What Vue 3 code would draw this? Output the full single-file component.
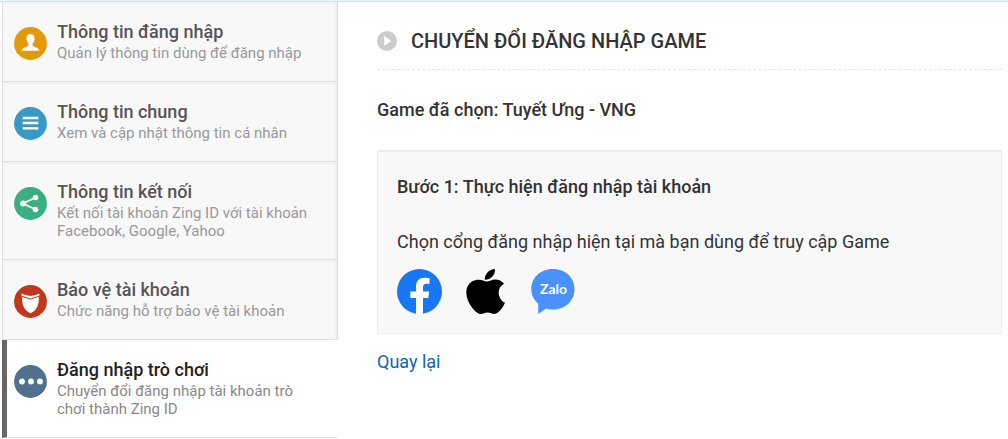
<script setup>
const items = [
  { id: 'login', title: 'Thông tin đăng nhập', text: 'Quản lý thông tin dùng để đăng nhập', color: '#e29a09' },
  { id: 'info', title: 'Thông tin chung', text: 'Xem và cập nhật thông tin cá nhân', color: '#3a99c4' },
  { id: 'share', title: 'Thông tin kết nối', text: 'Kết nối tài khoản Zing ID với tài khoản Facebook, Google, Yahoo', color: '#38ae82' },
  { id: 'shield', title: 'Bảo vệ tài khoản', text: 'Chức năng hỗ trợ bảo vệ tài khoản', color: '#c0371a' },
  { id: 'game', title: 'Đăng nhập trò chơi', text: 'Chuyển đổi đăng nhập tài khoản trò chơi thành Zing ID', color: '#50708e', active: true },
]
</script>

<template>
  <div class="page">
    <nav class="sidebar" aria-label="Tài khoản">
      <a v-for="item in items" :key="item.id" href="#" class="item" :class="{ active: item.active }">
        <svg class="icon" viewBox="0 0 33 33" aria-hidden="true">
          <circle cx="16.5" cy="16.5" r="16.4" :fill="item.color" />
          <path v-if="item.id === 'login'" fill="#fff" d="M16.500 7c2.700 0 4 1.800 4 4.400 0 2.300-.8 4-1.900 5.200v1.800c.7 1.400 6 1.700 6.900 5.400h-18c.9-3.700 6.200-4 6.900-5.400v-1.800c-1.100-1.200-1.900-2.900-1.900-5.200 0-2.600 1.300-4.400 4-4.400z" />
          <path v-else-if="item.id === 'info'" fill="#fff" d="M8.700 9.700h15.600v2.500H8.700zM8.700 14.800h15.600v2.500H8.700zM8.700 19.900h15.600v2.500H8.700z" />
          <g v-else-if="item.id === 'share'" fill="#fff">
            <path d="M21.500 10.500 9 16.500l12.500 6" fill="none" stroke="#fff" stroke-width="1.800" />
            <circle cx="21.500" cy="10.500" r="2.800" /><circle cx="9" cy="16.500" r="2.900" /><circle cx="21.500" cy="22.500" r="2.800" />
          </g>
          <g v-else-if="item.id === 'shield'">
            <path fill="#fff" d="M7.500 8.500c3 1.500 6 1.700 9 2.500 3-.8 6-1 9-2.500l-.8 7.500c-.5 6-3.200 10-8.200 12.300-5-2.300-7.700-6.300-8.200-12.300z" />
            <path fill="none" :stroke="item.color" stroke-width="1" d="M7.500 11.200c3 1.300 6 1.500 9 2.800 3-1.300 6-1.500 9-2.800" />
          </g>
          <g v-else fill="#fff">
            <circle cx="8" cy="16.500" r="2.900" /><circle cx="17" cy="16.500" r="2.900" /><circle cx="26" cy="16.500" r="2.900" />
          </g>
        </svg>
        <span class="label">
          <strong class="title">{{ item.title }}</strong>
          <span class="text">{{ item.text }}</span>
        </span>
      </a>
    </nav>

    <main class="content">
      <header class="heading">
        <svg class="bullet" viewBox="0 0 20 20" aria-hidden="true">
          <circle cx="10" cy="10" r="10" fill="#ccc" />
          <path d="M7.200 5v10l7.300-5z" fill="#fff" />
        </svg>
        <h1>CHUYỂN ĐỔI ĐĂNG NHẬP GAME</h1>
      </header>
      <p class="chosen">Game đã chọn: Tuyết Ưng - VNG</p>
      <section class="step">
        <h2>Bước 1: Thực hiện đăng nhập tài khoản</h2>
        <p>Chọn cổng đăng nhập hiện tại mà bạn dùng để truy cập Game</p>
        <div class="gates">
          <a href="#" aria-label="Facebook">
            <svg class="gate" viewBox="0 0 45 45" aria-hidden="true">
              <circle cx="22.500" cy="22.500" r="22.500" fill="#1877f2" />
              <path fill="#fff" d="M19 45V29h-5.700v-6.500H19v-5c0-5.700 3.400-8.800 8.500-8.800 2.500 0 5 .4 5 .4v5.600h-2.800c-2.800 0-3.700 1.700-3.700 3.500v4.300h6.200l-1 6.500H26v16a22 22 0 0 1-7 0z" />
            </svg>
          </a>
          <a href="#" aria-label="Apple">
            <svg class="gate" viewBox="0 0 45 45" aria-hidden="true">
              <path transform="translate(-2.900 0) scale(1.140 1.010)" d="M38.500 33.500c-.8 2-1.200 2.900-2.300 4.600-1.500 2.400-3.700 5.600-6.300 6.300-2.400.6-3.600-1.300-6.700-1.300-3.200 0-4.400 1.900-6.700 1.400-2.900-.6-5-3.400-6.600-5.800C3.500 29.500 2.300 17.500 9.200 12.700c2-1.400 4.300-2 6.300-2 2.900 0 4.800 1.700 7.100 1.700 2.200 0 4.300-2 7.500-2 2.700 0 5.700 1.500 7.600 4.100-7 4-5.800 15.500.8 19zM29.600 0c.5 3-.9 5.900-2.400 7.700-1.600 2-4.200 3.200-6.400 3C20.500 7.900 21.800 5.200 23.300 3.300 24.900 1.500 27.400.2 29.600 0z" />
            </svg>
          </a>
          <a href="#" aria-label="Zalo">
            <svg class="gate" viewBox="0 0 45 45" aria-hidden="true">
              <path fill="#4a90ff" d="M22 0c13 0 21.500 9 21.500 20S35 40.500 22 40.500c-2.700 0-4.800-.3-7-1L7.200 45V34.500C2.800 31 .3 26 .3 20 .3 9 9 0 22 0z" />
              <text x="22.500" y="25" text-anchor="middle" fill="#fff">Zalo</text>
            </svg>
          </a>
        </div>
      </section>
      <a href="#" class="back">Quay lại</a>
    </main>
  </div>
</template>

<style>
body {
  background: #fff;
}
</style>

<style scoped>
.page {
  display: flex;
  align-items: flex-start;
  border-top: 1px solid #eaf6fd;
  font-family: Roboto, "Liberation Sans", sans-serif;
  font-size: 18px;
  color: #333;
  box-shadow: inset 0 1px #cfe1ec;
}
.sidebar {
  flex: 0 0 336px;
  margin-left: 2px;
  padding-top: 1px;
}
.item {
  display: flex;
  gap: 10px;
  padding: 19px 20px 19px 11px;
  border: 1px solid #dedede;
  border-top: 0;
  background: #f8f8f8;
  box-shadow: inset -3px 2px 3px -1px #eee;
  color: #555;
  text-decoration: none;
}
.icon {
  flex: none;
  width: 33px;
  height: 33px;
  margin-top: 6px;
}
.label,
.title,
.text {
  display: block;
}
.title {
  margin-bottom: 1px;
  line-height: 22px;
  font-weight: 500;
}
.text {
  font-size: 15px;
  line-height: 18px;
  color: #999;
}
.active {
  padding-left: 7px;
  border-left: 5px solid #666;
  border-right-color: transparent;
  background: #fff;
  box-shadow: none;
}
.active .title {
  color: #222;
}
.active .text {
  color: #888;
}
.content {
  flex: 1;
  min-width: 0;
  padding: 0 6px 0 39px;
}
.heading {
  display: flex;
  align-items: center;
  gap: 14px;
  padding: 25px 0 13px;
  border-bottom: 1px dashed #e5e5e5;
}
.bullet {
  width: 20px;
  height: 20px;
}
h1 {
  margin: 0;
  font-size: 20px;
  line-height: 30px;
  font-weight: 500;
}
.chosen {
  margin: 28px 0;
  line-height: 24px;
  font-weight: 500;
}
.step {
  padding: 23px 19px 19px;
  border: 1px solid #ececec;
  border-top-width: 2px;
  background: #f8f8f8;
}
h2 {
  margin: 0 0 31px;
  font-size: 18px;
  line-height: 24px;
  font-weight: 500;
}
.step p {
  margin: 0 0 15px;
  line-height: 24px;
}
.gates {
  display: flex;
  gap: 22px;
}
.gates a,
.gate {
  display: block;
  width: 45px;
  height: 45px;
}
.gate text {
  font: 700 14px Lato, sans-serif;
}
.back {
  display: inline-block;
  margin-top: 16px;
  line-height: 24px;
  color: #1265ab;
  text-decoration: none;
}
</style>
